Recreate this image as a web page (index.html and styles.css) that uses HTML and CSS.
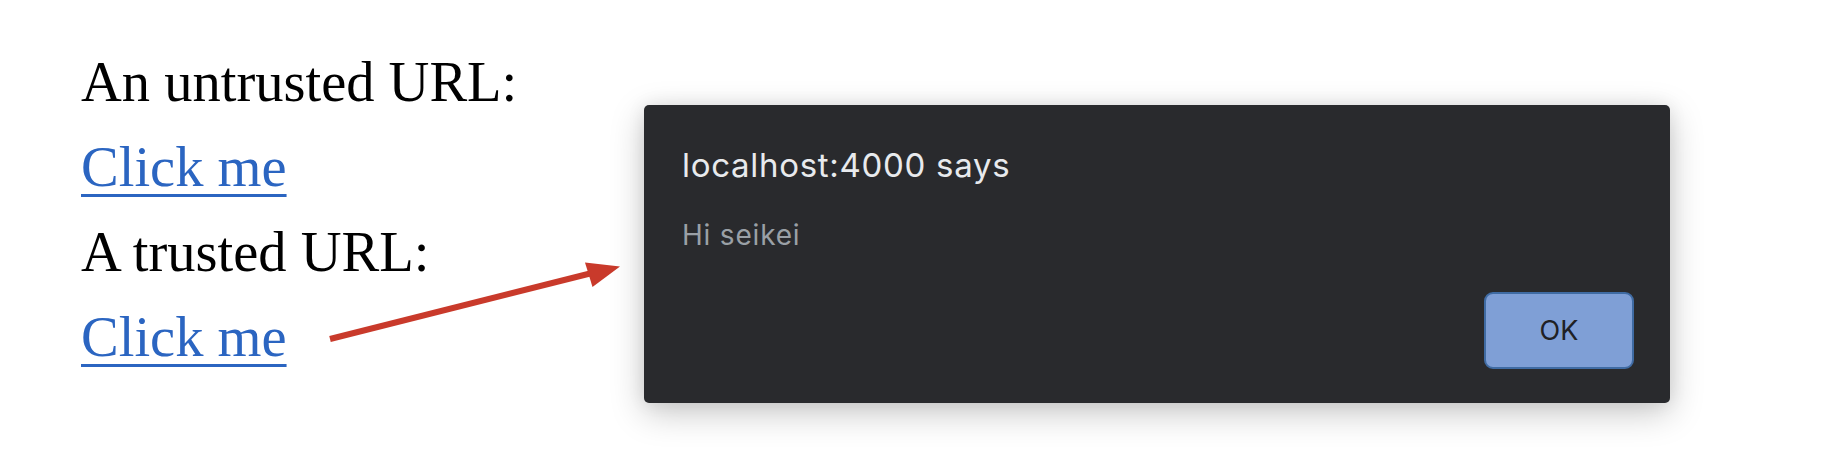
FILE: index.html
```html
<!DOCTYPE html>
<html lang="en">
<head>
<meta charset="utf-8">
<title>Alert</title>
<link rel="stylesheet" href="styles.css">
</head>
<body>
<main class="page">
  <div class="line">An untrusted URL:</div>
  <div class="line"><a class="link" href="#">Click me</a></div>
  <div class="line">A trusted URL:</div>
  <div class="line"><a class="link" href="#">Click me</a></div>
</main>

<svg class="arrow" width="1822" height="470" viewBox="0 0 1822 470" aria-hidden="true">
  <line x1="330" y1="339" x2="592" y2="273" stroke="#c93a2b" stroke-width="6"/>
  <polygon points="620,266.5 585,262.5 592.5,287" fill="#c93a2b"/>
</svg>

<div class="dialog" role="alertdialog">
  <div class="dialog-title">localhost:4000 says</div>
  <div class="dialog-message">Hi seikei</div>
  <div class="dialog-actions">
    <button class="ok-btn" type="button">OK</button>
  </div>
</div>
</body>
</html>
```

FILE: styles.css
```css
html, body {
  margin: 0;
  padding: 0;
  background: #ffffff;
}

body {
  width: 1822px;
  height: 470px;
  position: relative;
  overflow: hidden;
}

.page {
  display: flex;
  flex-direction: column;
  padding: 40px 0 0 81px;
  font-family: "Liberation Serif", "Times New Roman", serif;
  font-size: 56.5px;
  line-height: 85px;
  color: #000000;
}

.line {
  height: 85px;
  white-space: nowrap;
}

.link {
  color: #2b65c1;
  text-decoration: underline;
  text-decoration-thickness: 3px;
  text-underline-offset: 8px;
}

.arrow {
  position: absolute;
  left: 0;
  top: 0;
  pointer-events: none;
}

.dialog {
  position: absolute;
  left: 644px;
  top: 105px;
  width: 1026px;
  height: 298px;
  box-sizing: border-box;
  padding: 40px 36px 34px 38px;
  background: #292a2d;
  border-radius: 5px;
  box-shadow: 0 10px 34px rgba(0, 0, 0, 0.22), 0 0 18px rgba(0, 0, 0, 0.08);
  display: flex;
  flex-direction: column;
  font-family: Inter, "Liberation Sans", Arial, sans-serif;
}

.dialog-title {
  font-size: 33px;
  line-height: 40px;
  color: #e8eaed;
  letter-spacing: 0.7px;
}

.dialog-message {
  margin-top: 34px;
  font-size: 28px;
  line-height: 32px;
  color: #9aa0a6;
  letter-spacing: 0.8px;
}

.dialog-actions {
  margin-top: auto;
  display: flex;
  justify-content: flex-end;
}

.ok-btn {
  width: 150px;
  height: 77px;
  box-sizing: border-box;
  border: 2px solid #3f6ba3;
  border-radius: 9px;
  background: #7f9fd6;
  color: #202124;
  font-family: Inter, "Liberation Sans", Arial, sans-serif;
  font-size: 27px;
  padding: 0;
}
```
